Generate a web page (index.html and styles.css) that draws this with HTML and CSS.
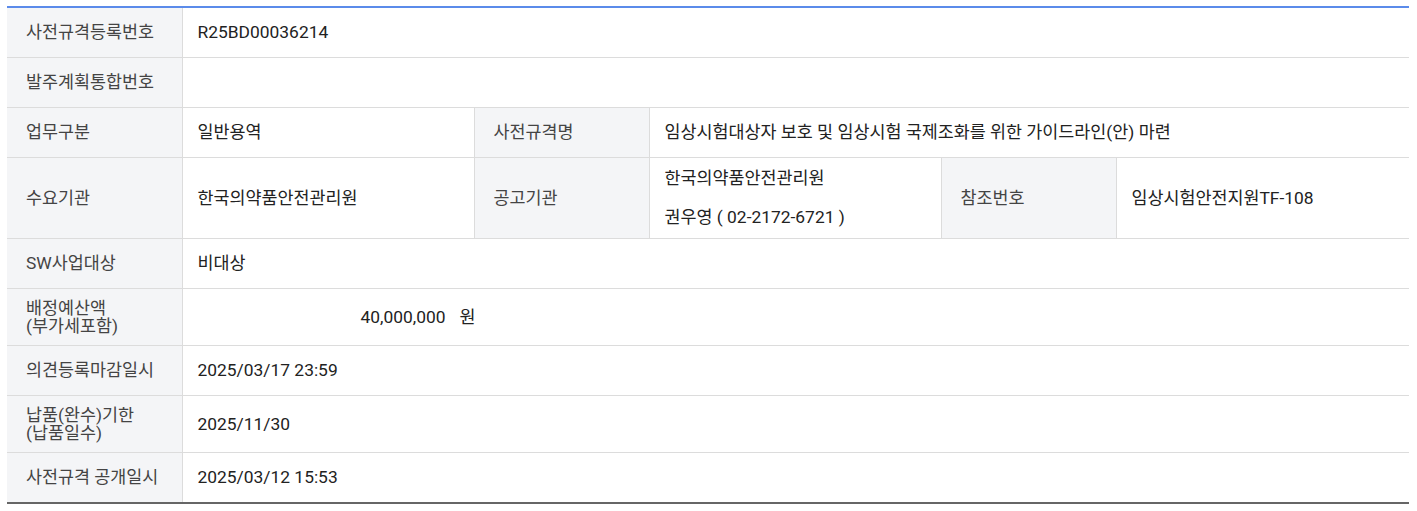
FILE: index.html
```html
<!DOCTYPE html>
<html lang="ko">
<head>
<meta charset="utf-8">
<title>사전규격 상세</title>
<link rel="stylesheet" href="styles.css">
</head>
<body>
<div class="wrap">
<table class="info">
  <colgroup>
    <col class="c-th"><col class="c-td"><col class="c-th"><col class="c-td"><col class="c-th"><col class="c-last">
  </colgroup>
  <tbody>
    <tr>
      <th>사전규격등록번호</th>
      <td colspan="5">R25BD00036214</td>
    </tr>
    <tr>
      <th>발주계획통합번호</th>
      <td colspan="5"></td>
    </tr>
    <tr>
      <th>업무구분</th>
      <td>일반용역</td>
      <th>사전규격명</th>
      <td colspan="3">임상시험대상자 보호 및 임상시험 국제조화를 위한 가이드라인(안) 마련</td>
    </tr>
    <tr>
      <th>수요기관</th>
      <td>한국의약품안전관리원</td>
      <th>공고기관</th>
      <td class="multi"><p>한국의약품안전관리원</p><p>권우영 ( 02-2172-6721 )</p></td>
      <th>참조번호</th>
      <td>임상시험안전지원TF-108</td>
    </tr>
    <tr>
      <th>SW사업대상</th>
      <td colspan="5">비대상</td>
    </tr>
    <tr>
      <th class="two">배정예산액<br>(부가세포함)</th>
      <td colspan="5"><span class="amount">40,000,000</span><span class="unit">원</span></td>
    </tr>
    <tr>
      <th>의견등록마감일시</th>
      <td colspan="5">2025/03/17 23:59</td>
    </tr>
    <tr>
      <th class="two">납품(완수)기한<br>(납품일수)</th>
      <td colspan="5">2025/11/30</td>
    </tr>
    <tr>
      <th>사전규격 공개일시</th>
      <td colspan="5">2025/03/12 15:53</td>
    </tr>
  </tbody>
</table>
</div>
</body>
</html>
```
FILE: styles.css
```css
html, body {
  margin: 0;
  padding: 0;
  background: #fff;
}
body {
  font-family: Roboto, "Noto Sans CJK KR", sans-serif;
  font-size: 17.4px;
  color: #222;
}
.wrap {
  padding: 6px 8px 0 7px;
}
.info {
  width: 1402px;
  table-layout: fixed;
  border-collapse: collapse;
  border-top: 2px solid #5b8bea;
  border-bottom: 2px solid #666;
}
.c-th { width: 175px; }
.c-td { width: 292px; }
.c-last { width: 293px; }
.info th,
.info td {
  border-bottom: 1px solid #dcdcdc;
  vertical-align: middle;
  text-align: left;
  line-height: 25px;
}
.info th {
  background: #f4f5f7;
  color: #444;
  font-weight: 400;
  padding: 12px 12px 12px 19px;
  border-right: 1px solid #dcdcdc;
}
.info td {
  padding: 12px 15px;
  color: #222;
  border-right: 1px solid #dcdcdc;
}
.info td:last-child { border-right: 0; }
.info tr:last-child th,
.info tr:last-child td { border-bottom: 0; }
.info th.two {
  line-height: 18px;
  padding-top: 10px;
  padding-bottom: 10px;
}
.info td.multi {
  padding: 8px 15px;
}
.multi p {
  margin: 0;
  line-height: 25px;
}
.multi p + p {
  margin-top: 14px;
}
.amount {
  display: inline-block;
  width: 248px;
  text-align: right;
}
.unit {
  margin-left: 14px;
}
```
